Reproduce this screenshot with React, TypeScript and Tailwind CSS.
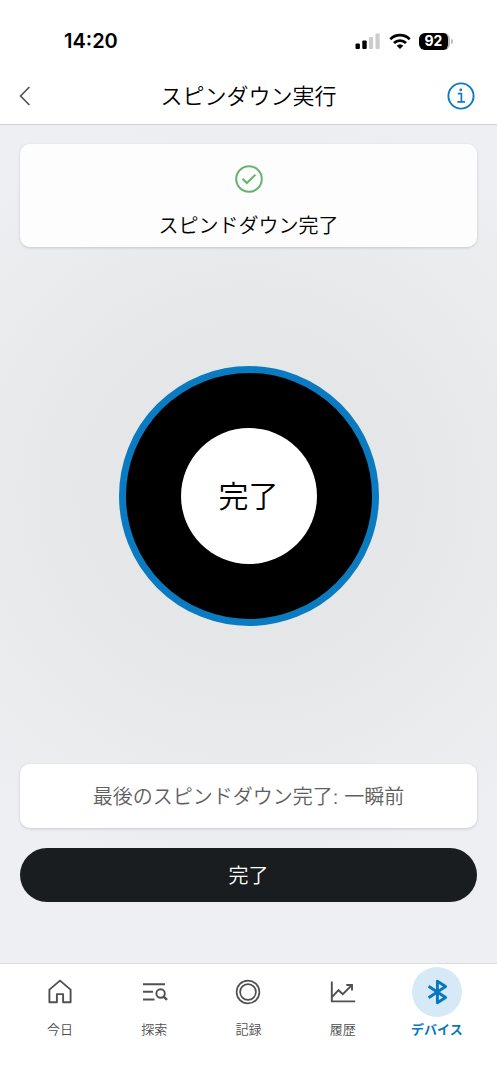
import type { ReactNode } from "react";

function SignalIcon() {
  return (
    <svg width="26" height="16" viewBox="0 0 26 16" aria-hidden="true">
      <rect x="0.5" y="10.5" width="4.4" height="5.5" rx="1" fill="#000" />
      <rect x="7.3" y="7.5" width="4.4" height="8.5" rx="1" fill="#000" />
      <rect x="13.9" y="4" width="4.2" height="12" rx="1" fill="#ccc" />
      <rect x="20.5" y="0.5" width="4.2" height="15.5" rx="1" fill="#ccc" />
    </svg>
  );
}

function WifiIcon() {
  return (
    <svg width="22" height="16" viewBox="0 0 22 16" fill="none" stroke="#000" strokeWidth="2.8" aria-hidden="true">
      <path d="M1.3 6.2a13.8 13.8 0 0 1 19.4 0" />
      <path d="M5 10.1a8.6 8.6 0 0 1 12 0" />
      <path d="M7.7 12.7a4.8 4.8 0 0 1 6.6 0L11 16z" fill="#000" stroke="none" />
    </svg>
  );
}

function Battery({ level }: { level: number }) {
  return (
    <div className="flex items-center gap-px">
      <div className="flex h-[17px] w-[31px] items-center justify-center rounded-[6px] border-r-2 border-[#bbb] bg-black text-sm font-bold leading-none text-white">
        {level}
      </div>
      <span className="h-[5px] w-[2px] rounded-r-full bg-[#bbb]" />
    </div>
  );
}

function CheckIcon() {
  return (
    <svg width="28" height="28" viewBox="0 0 28 28" fill="none" stroke="#63b56c" strokeWidth="2" aria-hidden="true">
      <circle cx="14" cy="14" r="12.8" />
      <path d="M7.6 13.8l4.2 4.2 8.6-8.2" />
    </svg>
  );
}

function InfoIcon() {
  return (
    <svg width="28" height="28" viewBox="0 0 28 28" fill="none" stroke="#0f7ac0" strokeWidth="1.9" aria-hidden="true">
      <circle cx="14" cy="14" r="12.6" />
      <path d="M10.8 11.6h3.6v8M10.4 19.9h7.6" strokeWidth="1.7" />
      <circle cx="13.8" cy="7.9" r="1.4" fill="#0f7ac0" stroke="none" />
    </svg>
  );
}

function NavSvg({ children }: { children: ReactNode }) {
  return (
    <svg width="28" height="28" viewBox="0 0 28 28" fill="none" stroke="currentColor" strokeWidth="1.9" aria-hidden="true">
      {children}
    </svg>
  );
}

const homeIcon = (
  <NavSvg>
    <path d="M3.4 11.6L14 2.6l10.6 9v12.7h-7.5v-8.2h-6.2v8.2H3.4z" strokeLinejoin="round" />
  </NavSvg>
);
const exploreIcon = (
  <NavSvg>
    <path d="M3 6.2h22M3 13.8h10M3 21.5h11.5" />
    <circle cx="20.6" cy="15.5" r="4.2" />
    <path d="M23.4 18.4l3.6 3.5" strokeWidth="2.4" />
  </NavSvg>
);
const recordIcon = (
  <NavSvg>
    <circle cx="14" cy="14" r="11.4" strokeWidth="1.7" />
    <circle cx="14" cy="14" r="7.9" strokeWidth="1.7" />
  </NavSvg>
);
const historyIcon = (
  <NavSvg>
    <path d="M2.8 3.4v20h23.4M3.2 18.8l6.3-6.6 4.3 4L22.6 7.4" />
    <path d="M17.3 7h5.7v5.6" />
  </NavSvg>
);
const bluetoothIcon = (
  <NavSvg>
    <path d="M5.6 8.2l17 11.3-8.2 5.2V3.3l8.2 5.2-17 11.3" strokeWidth="2.9" strokeLinejoin="round" />
  </NavSvg>
);

const tabs = [
  { label: "今日", icon: homeIcon, active: false },
  { label: "探索", icon: exploreIcon, active: false },
  { label: "記録", icon: recordIcon, active: false },
  { label: "履歴", icon: historyIcon, active: false },
  { label: "デバイス", icon: bluetoothIcon, active: true },
];

export default function App() {
  return (
    <div className="flex min-h-screen flex-col bg-white font-['Inter','Noto_Sans_CJK_JP',sans-serif] text-black">
      <header className="border-b border-[#cfd0d2] bg-white">
        <div className="flex h-[68px] items-end justify-between pr-11 pb-[15px] pl-16">
          <span className="text-xl leading-6 font-semibold">14:20</span>
          <div className="flex h-6 items-center gap-2">
            <SignalIcon />
            <WifiIcon />
            <Battery level={92} />
          </div>
        </div>
        <div className="grid h-14 grid-cols-[56px_1fr_56px] items-center px-4">
          <button type="button" aria-label="戻る" className="flex h-10 w-10 items-center">
            <svg width="18" height="20" viewBox="0 0 18 20" fill="none" stroke="#555" strokeWidth="1.7" aria-hidden="true">
              <path d="M13.4 1L4.6 10l8.8 9" />
            </svg>
          </button>
          <h1 className="text-center text-[22px] leading-8 font-[350]">スピンダウン実行</h1>
          <button type="button" aria-label="情報" className="flex h-10 w-10 items-center justify-center justify-self-end">
            <InfoIcon />
          </button>
        </div>
      </header>

      <main className="flex flex-1 flex-col bg-[radial-gradient(circle_at_50%_44%,#e1e3e4_0%,#e5e7e8_30%,#eeeff2_75%)] px-5 pt-[19px] pb-[61px]">
        <section className="flex flex-col items-center gap-[19px] rounded-[10px] bg-white/90 pt-[21px] pb-[7px] shadow-[0_1px_3px_rgba(0,0,0,0.16)]">
          <CheckIcon />
          <p className="text-xl leading-7 font-[350]">スピンドダウン完了</p>
        </section>

        <div className="flex flex-1 items-center justify-center pb-5">
          <div className="flex h-[260px] w-[260px] items-center justify-center rounded-full border-[7px] border-[#0b7bc1] bg-black">
            <div className="flex h-[136px] w-[136px] items-center justify-center rounded-full bg-white text-3xl font-[350]">
              完了
            </div>
          </div>
        </div>

        <section className="rounded-[10px] bg-white pt-[19px] pb-[17px] text-center text-xl leading-7 font-[350] text-[#606060] shadow-[0_1px_3px_rgba(0,0,0,0.16)]">
          最後のスピンドダウン完了: 一瞬前
        </section>
        <button type="button" className="mt-5 rounded-full bg-[#191d20] pt-[14px] pb-3 text-xl leading-7 font-[350] text-white">
          完了
        </button>
      </main>

      <nav className="grid h-[117px] grid-cols-5 border-t border-[#dcdddf] bg-white px-[13px] pt-[3px]">
        {tabs.map((tab) => (
          <a
            key={tab.label}
            href="#"
            aria-current={tab.active ? "page" : undefined}
            className={
              tab.active
                ? "flex flex-col items-center gap-0.5 font-bold text-[#0878bd]"
                : "flex flex-col items-center gap-0.5 font-[350] text-[#505050]"
            }
          >
            <span
              className={
                tab.active
                  ? "flex h-[50px] w-[50px] items-center justify-center rounded-full bg-[#d5e9f6]"
                  : "flex h-[50px] w-[50px] items-center justify-center"
              }
            >
              {tab.icon}
            </span>
            <span className="text-[13px] leading-5">{tab.label}</span>
          </a>
        ))}
      </nav>
    </div>
  );
}
